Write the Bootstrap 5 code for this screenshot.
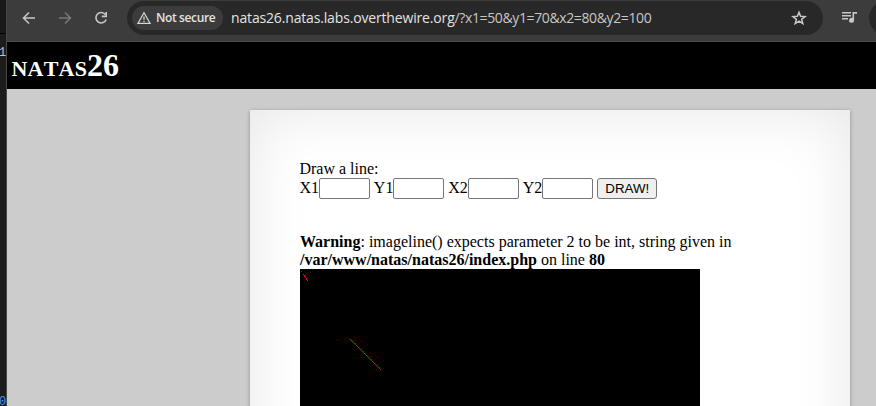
<!DOCTYPE html>
<html lang="en">
<head>
<meta charset="utf-8">
<title>natas26</title>
<link href="https://cdn.jsdelivr.net/npm/bootstrap@5.3.0/dist/css/bootstrap.min.css" rel="stylesheet">
<style>
body{width:876px;height:406px;background:#1c1c1c;overflow:hidden}
.gutter{width:7px;height:406px;background:#1c1c1c;border-right:1px solid #484848;font:12px/14px "Liberation Mono",monospace;overflow:hidden}
.gutter-top{height:34px;background:#191919;border-bottom:1px solid #050505}
.gutter-one{color:#c5b9d9;margin-top:12px;margin-left:-1px}
.gutter-zero{color:#4b91e8;margin-top:auto;margin-left:-1px;line-height:11px;margin-bottom:-2px}
.browser{width:869px;height:406px}
.toolbar{height:42px;background:#3c3c3c;border-bottom:1px solid #4a4a4a;overflow:hidden}
.toolbar svg{display:block;flex:none}
.nav-icons{width:120px;height:36px;padding-left:14px;gap:20px}
.omnibox{width:696px;height:34px;margin-top:1px;background:#282828;padding:0 16px 0 5px}
.chip{width:91px;height:24px;background:#3c3c3c;padding-left:5px;gap:5px;color:#e3e3e3;font:600 12px/24px "Open Sans",sans-serif;white-space:nowrap}
.chip span{letter-spacing:-.38px}
.address{margin-left:8px;font:14px/20px "Open Sans",sans-serif;color:#c7c7c7;letter-spacing:-.38px;white-space:nowrap}
.address b{font-weight:400;color:#e3e3e3;letter-spacing:-.16px}
.profile{width:40px;height:34px;background:#282828;margin-left:12px;margin-top:1px;flex:none}
.title-bar{height:47px;background:#000;color:#fff;padding-left:4.5px}
.title-bar h1{font:bold 32px/37px "Liberation Serif",serif;font-variant:small-caps;font-kerning:none;margin:0;padding-top:5px}
.title-bar span{letter-spacing:.2px}
.page{background:#ccc;padding:21px 0 0 243px;overflow:hidden}
.sheet{width:600px;height:400px;padding:50px;background:#fff;box-shadow:0 1px 4px rgba(0,0,0,.3),0 0 60px rgba(0,0,0,.1) inset;font:16px/18px "Liberation Serif",serif;color:#000}
.sheet form{margin-left:-.6px}
.fields{height:21px;white-space:nowrap;gap:3.9px}
.fields label{height:21px;line-height:20px}
.fields input{width:51px;height:21px;border:1px solid #767676;border-radius:2px;background:#fff;padding:1px 2px;vertical-align:top}
.draw-btn{width:60px;height:21px;border:1px solid #767676;border-radius:3px;background:#efefef;color:#000;padding:0;font:13.33px/19px "Liberation Sans",sans-serif}
.notice{margin-top:34px}
.plot{display:block;width:400px;height:300px;background:#000}
</style>
<script src="https://cdn.jsdelivr.net/npm/bootstrap@5.3.0/dist/js/bootstrap.bundle.min.js"></script>
</head>
<body class="d-flex">
<div class="gutter d-flex flex-column flex-shrink-0">
<div class="gutter-top"></div><div class="gutter-one">1</div><div class="gutter-zero">0</div>
</div>
<div class="browser d-flex flex-column flex-shrink-0">
<header class="toolbar d-flex flex-shrink-0">
<div class="nav-icons d-flex align-items-center flex-shrink-0">
<svg width="16" height="16" viewBox="0 0 16 16" fill="none" stroke="#c7c7c7" stroke-width="1.6"><path d="M14 8H3M8 2.5 2.5 8 8 13.5"/></svg>
<svg width="16" height="16" viewBox="0 0 16 16" fill="none" stroke="#777" stroke-width="1.6"><path d="M2 8h11M8 2.5 13.5 8 8 13.5"/></svg>
<svg width="16" height="16" viewBox="0 0 16 16" fill="none" stroke="#c7c7c7" stroke-width="1.6"><path d="M12.3 4.6A5.2 5.2 0 1 0 13.1 9.4M13.2 2v4.4H8.8"/></svg>
</div>
<div class="omnibox rounded-pill d-flex align-items-center flex-shrink-0">
<div class="chip rounded-pill d-flex align-items-center flex-shrink-0">
<svg width="14" height="14" viewBox="0 0 14 14" fill="none" stroke="#d5d5d5" stroke-width="1.3"><path d="M7 1.8 13 12.3H1ZM7 5.5v3.2M7 9.7V11"/></svg><span>Not secure</span>
</div>
<div class="address"><b>natas26.natas.labs.overthewire.org</b>/?x1=50&amp;y1=70&amp;x2=80&amp;y2=100</div>
<svg class="ms-auto" width="16" height="16" viewBox="0 0 16 16" fill="none" stroke="#c7c7c7" stroke-width="1.5"><path d="m8 2.2 1.6 4 4.5.3-3.5 2.8 1.2 4.3L8 11.2l-3.8 2.4 1.2-4.3L1.9 6.5l4.5-.3Z"/></svg>
</div>
<svg class="ms-3 mt-2" width="18" height="18" viewBox="0 0 18 18" fill="#c7c7c7"><path d="M3 4h9v1.6H3ZM3 7h9v1.6H3ZM3 10h6v1.6H3ZM12.2 4H18v1.7h-2.9v6.6a2.5 2.5 0 1 1-1.6-2.3V4Z"/></svg>
<div class="profile rounded-pill"></div>
</header>
<div class="title-bar flex-shrink-0"><h1><span>natas</span>26</h1></div>
<main class="page flex-grow-1">
<div class="sheet">
<form>
<div>Draw a line:</div>
<div class="fields d-flex">
<label>X1<input type="text"></label>
<label>Y1<input type="text"></label>
<label>X2<input type="text"></label>
<label>Y2<input type="text"></label>
<button type="button" class="draw-btn">DRAW!</button>
</div>
</form>
<div class="notice"><b>Warning</b>: imageline() expects parameter 2 to be int, string given in <b>/var/www/natas/natas26/index.php</b> on line <b>80</b></div>
<svg class="plot" viewBox="0 0 400 300" stroke="#f00" shape-rendering="crispEdges"><path d="M1 2.5h1M3 5.5h1M4 6.5h1M4 7.5h1M5 8.5h1M6 9.5h1M6 10.5h1M7 11.5h1"/><path d="M50 70 81 101"/></svg>
</div>
</main>
</div>
</body>
</html>
